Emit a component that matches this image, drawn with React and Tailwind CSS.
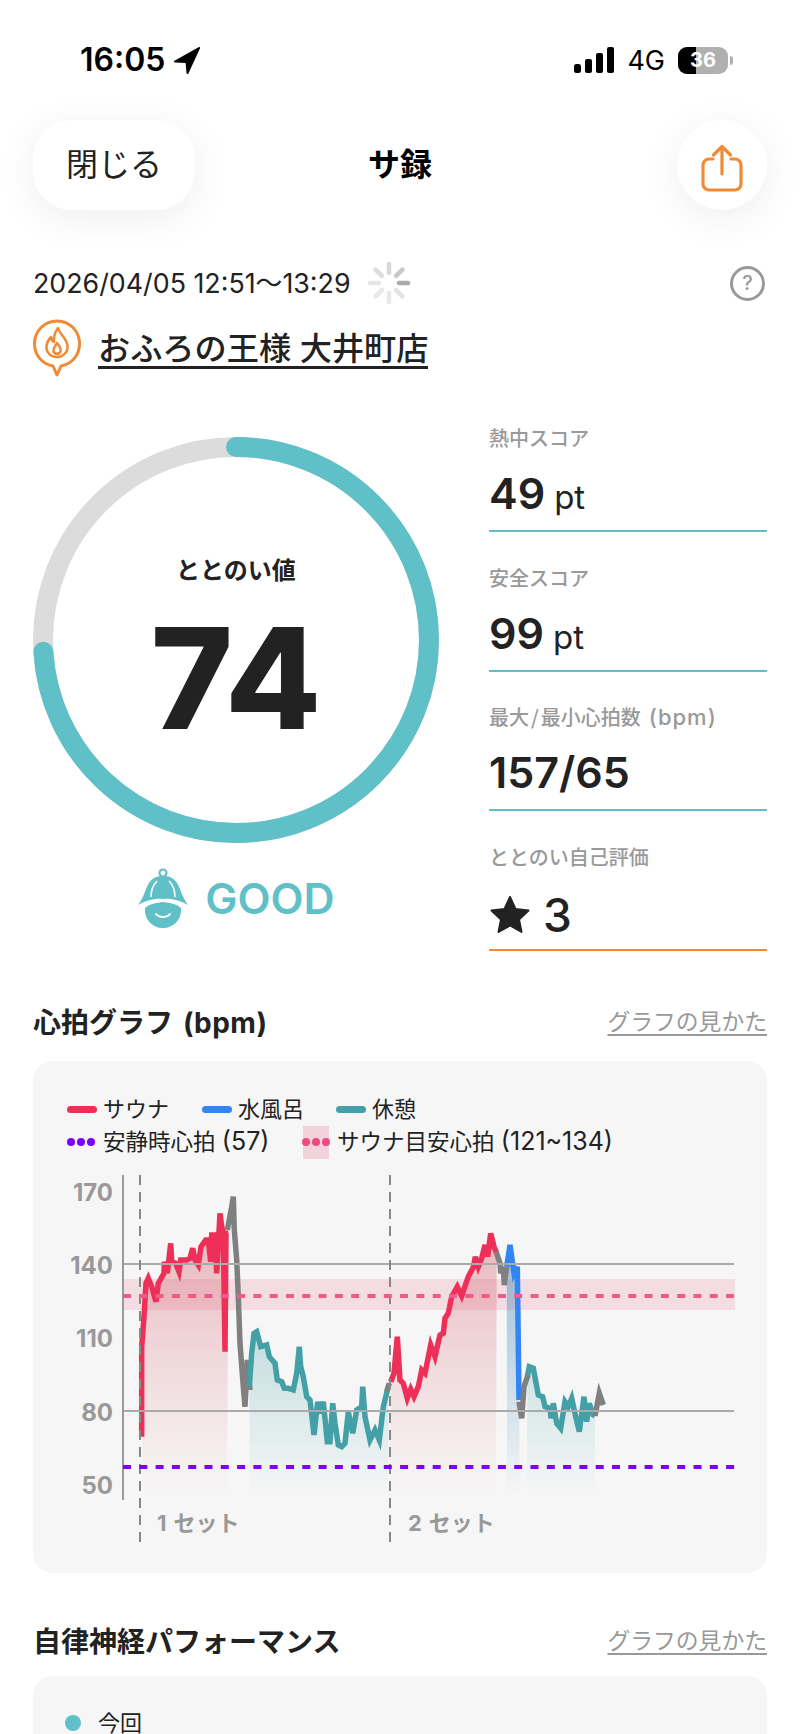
const z3 = (pts) => pts.map(([x, y]) => [40 + x / 3, 1070 + y / 3]);
const z4 = (pts) => pts.map(([x, y]) => [370 + x / 3, 1170 + y / 3]);
const toLine = (pts) => pts.map(([x, y]) => `${x.toFixed(1)},${y.toFixed(1)}`).join(" ");
const toArea = (pts, x0, x1) => `${x0},1497 ${toLine(pts)} ${x1},1497`;

const sauna1 = z3([[305,1100],[305,830],[312,740],[318,640],[325,625],[335,650],[348,695],[355,640],[372,610],[373,575],[382,610],[392,520],[395,575],[407,580],[417,605],[422,570],[440,570],[450,565],[458,535],[465,570],[475,585],[483,530],[497,510],[505,510],[512,575],[515,495],[525,495],[530,610],[540,430],[545,470],[550,490],[555,845],[558,490],[565,490]]);
const sauna1Top = sauna1.filter((p) => p[1] < 1340);
const gray1 = z3([[562,480],[575,410],[580,380],[583,480],[590,570],[595,680],[600,820],[610,950],[615,1010],[622,870],[630,960]]);
const rest1 = z3([[628,950],[635,850],[642,790],[650,785],[662,830],[680,825],[688,860],[705,880],[712,930],[725,935],[733,955],[745,955],[760,960],[770,910],[778,830],[782,890],[790,920],[800,980],[810,990],[822,1095],[833,995],[840,1030],[850,995],[862,1115],[870,1115],[878,1000],[885,1060],[895,1125],[905,1130],[915,1120],[925,1025],[938,1090],[950,1020],[965,1010],[968,950],[975,1040],[990,1110],[1005,1080],[1018,1110],[1030,1010],[1045,950]]);
const gray2 = z3([[1040,965],[1048,940]]);
const sauna2 = z4([[62,635],[72,610],[82,500],[90,630],[100,640],[112,685],[122,658],[132,680],[145,650],[155,600],[165,610],[182,525],[195,560],[210,495],[220,490],[225,445],[235,430],[245,380],[262,350],[275,378],[295,320],[310,292],[316,260],[325,290],[335,265],[345,225],[353,260],[362,190],[372,230],[380,250]]);
const gray3 = z4([[378,245],[390,280],[392,310],[400,290],[403,345],[410,290]]);
const cold = z4([[410,290],[420,225],[432,310],[442,290],[447,690]]);
const gray4 = z4([[447,695],[455,745],[462,650],[474,615]]);
const rest2 = z4([[472,620],[478,590],[490,595],[505,675],[518,680],[525,710],[540,715],[543,745],[550,700],[560,760],[572,775],[585,695],[595,710],[605,685],[615,730],[628,785],[642,680],[650,755],[658,700],[670,735],[675,738]]);
const gray5 = z4([[675,738],[688,670],[700,705]]);

function StatusBar() {
  return (
    <div className="flex h-[120px] items-center justify-between pl-[80px] pr-[67px] text-black">
      <div className="flex items-center gap-[8px]">
        <span className="text-[32px] leading-none font-semibold">16:05</span>
        <svg width="28" height="28" viewBox="0 0 28 28">
          <path d="M26 2 L2 15.5 L13.5 16 L14.5 27 Z" fill="#000" stroke="#000" strokeWidth="2" strokeLinejoin="round" />
        </svg>
      </div>
      <div className="flex items-center">
        <svg width="40" height="26" viewBox="0 0 40 26">
          <rect x="0" y="17" width="7" height="9" rx="2.5" fill="#000" />
          <rect x="11" y="12" width="7" height="14" rx="2" fill="#000" />
          <rect x="22" y="6" width="7" height="20" rx="2" fill="#000" />
          <rect x="33" y="0" width="7" height="26" rx="2" fill="#000" />
        </svg>
        <span className="ml-[13px] text-[27px] leading-none">4G</span>
        <div className="ml-[13px] relative flex h-[27px] w-[50px] overflow-hidden rounded-[9px] bg-[#b0b0b0]">
          <div className="h-full w-[18px] bg-black" />
          <span className="absolute inset-0 flex items-center justify-center text-[20px] font-bold text-white">36</span>
        </div>
        <div className="ml-[2px] h-[9px] w-[3px] rounded-r-full bg-[#b0b0b0]" />
      </div>
    </div>
  );
}

function Header() {
  return (
    <div className="flex h-[90px] items-center px-[33px]">
      <div className="flex w-[162px]">
        <div className="flex h-[90px] w-[162px] items-center justify-center rounded-[38px] bg-white text-[32px] text-[#222] shadow-[0_8px_40px_rgba(0,0,0,0.07)]">
          閉じる
        </div>
      </div>
      <div className="flex-1 text-center text-[32px] font-bold text-black">サ録</div>
      <div className="flex w-[162px] justify-end">
        <div className="flex h-[90px] w-[90px] items-center justify-center rounded-full bg-white pt-[6px] shadow-[0_8px_40px_rgba(0,0,0,0.07)]">
          <svg width="44" height="50" viewBox="0 0 44 50" fill="none" stroke="#f08a34" strokeWidth="3.2" strokeLinecap="round" strokeLinejoin="round">
            <path d="M13 16 H9 a6 6 0 0 0 -6 6 V41 a6 6 0 0 0 6 6 H35 a6 6 0 0 0 6 -6 V22 a6 6 0 0 0 -6 -6 H31" />
            <path d="M22 31 V4 M13.5 12 L22 3.5 L30.5 12" />
          </svg>
        </div>
      </div>
    </div>
  );
}

function Spinner() {
  const spokes = [
    [0, "#aaaaaa"],
    [45, "#e2e2e2"],
    [90, "#e8e8e8"],
    [135, "#e8e8e8"],
    [180, "#e6e6e6"],
    [225, "#dddddd"],
    [270, "#d8d8d8"],
    [315, "#c8c8c8"],
  ];
  return (
    <svg width="44" height="44" viewBox="-22 -22 44 44" className="ml-[16px]">
      {spokes.map(([a, c]) => (
        <line key={a} x1="10" y1="0" x2="19" y2="0" stroke={c} strokeWidth="4.5" strokeLinecap="round" transform={`rotate(${a})`} />
      ))}
    </svg>
  );
}

function FlamePin() {
  return (
    <svg width="48" height="58" viewBox="0 0 48 58" fill="none" stroke="#f08a34" strokeWidth="3" strokeLinejoin="round" strokeLinecap="round">
      <path d="M20 47 C8 45 1.5 35 1.5 24.5 C1.5 12 11.5 2 24 2 C36.5 2 46.5 12 46.5 24.5 C46.5 35 40 45 28 47 L24 56 Z" fill="#fff" />
      <path d="M25 9 C27 16 34 19 34.5 27 C35 34 29 38 24 38 C18 38 13 34 13.5 27 C14 23 16 20 18 18 C18.5 21 19.5 22.5 21 23 C20.5 18 22 13 25 9 Z" strokeWidth="2.5" />
      <path d="M24 24 C26 27 28.5 29 27.5 32.5 C26.5 35.5 21.5 35.5 20.5 32.5 C20 30 22 27 24 24 Z" strokeWidth="2.5" />
    </svg>
  );
}

function Ring() {
  const cx = 203;
  const r = 193;
  const c = 2 * Math.PI * r;
  return (
    <div className="relative h-[406px] w-[406px]">
      <svg width="406" height="406" viewBox="0 0 406 406" className="-rotate-90">
        <circle cx={cx} cy={cx} r={r} fill="none" stroke="#dcdcdc" strokeWidth="20" />
        <circle cx={cx} cy={cx} r={r} fill="none" stroke="#5fc0c8" strokeWidth="20" strokeLinecap="round" strokeDasharray={`${c * 0.74} ${c}`} />
      </svg>
      <div className="absolute inset-0 flex flex-col items-center">
        <div className="mt-[118px] text-[24px] leading-[32px] font-bold text-[#222]">ととのい値</div>
        <div className="mt-[21px] text-[140px] leading-[140px] font-extrabold text-[#222]">74</div>
      </div>
    </div>
  );
}

function GoodIcon() {
  return (
    <svg width="52" height="60" viewBox="0 0 52 60">
      <circle cx="26" cy="5" r="3.5" fill="none" stroke="#5fc0c8" strokeWidth="2.2" />
      <path d="M26 8 C15 8 12 14 9 21 C7 27 4 33 1 37 C8 33 18 30 26 31 C34 30 44 33 51 37 C48 33 45 27 43 21 C40 14 37 8 26 8 Z" fill="#5fc0c8" />
      <path d="M8 40 C14 35 20 35 26 34 C32 35 38 35 44 40 C45 52 36 60 26 60 C16 60 7 52 8 40 Z" fill="#5fc0c8" />
      <path d="M19 46 C22 50 30 50 33 46" fill="none" stroke="#fff" strokeWidth="2" strokeLinecap="round" />
      <path d="M14 29 C14 22 16 17 20 13 M38 29 C38 22 36 17 32 13" fill="none" stroke="#fff" strokeWidth="1.6" />
    </svg>
  );
}

function Stat({ label, children, line = "border-[#5fc0c8]" }) {
  return (
    <div className={`h-[108px] border-b-2 ${line}`}>
      <div className="font-['Noto_Sans_CJK_JP',sans-serif] text-[20px] leading-[28px] font-medium text-[#999]">{label}</div>
      <div className="mt-[20px] flex h-[50px] items-baseline text-[#222]">{children}</div>
    </div>
  );
}

function Dots({ color }) {
  return (
    <div className="flex w-[28px] shrink-0 justify-between">
      <div className={`h-[8px] w-[8px] rounded-full ${color}`} />
      <div className={`h-[8px] w-[8px] rounded-full ${color}`} />
      <div className={`h-[8px] w-[8px] rounded-full ${color}`} />
    </div>
  );
}

function Legend() {
  return (
    <div className="pl-[34px] text-[22px] text-[#222]">
      <div className="flex h-[32px] items-center">
        <div className="h-[7px] w-[30px] rounded-full bg-[#ee2f58]" />
        <span className="ml-[6px]">サウナ</span>
        <div className="ml-[33px] h-[7px] w-[30px] rounded-full bg-[#3385f5]" />
        <span className="ml-[6px]">水風呂</span>
        <div className="ml-[32px] h-[7px] w-[30px] rounded-full bg-[#43a0a6]" />
        <span className="ml-[6px]">休憩</span>
      </div>
      <div className="flex h-[33px] items-center">
        <Dots color="bg-[#7a00ff]" />
        <span className="ml-[8px] w-[200px] text-[22.5px]">
          安静時心拍 <span className="text-[25px]">(57)</span>
        </span>
        <div className="flex h-[33px] w-[26px] items-center justify-center bg-[#f2d3dc]">
          <Dots color="bg-[#ee4a80]" />
        </div>
        <span className="ml-[8px] text-[22.5px]">
          サウナ目安心拍 <span className="text-[25px]">(121~134)</span>
        </span>
      </div>
    </div>
  );
}

function Chart() {
  const yLabels = [
    ["170", 1192],
    ["140", 1265],
    ["110", 1338],
    ["80", 1412],
    ["50", 1485],
  ];
  return (
    <svg width="680" height="375" viewBox="60 1170 680 375" className="mt-[11px] ml-[27px] block">
      <defs>
        <linearGradient id="redFill" gradientUnits="userSpaceOnUse" x1="0" y1="1200" x2="0" y2="1497">
          <stop offset="0" stopColor="#c93a48" stopOpacity="0.38" />
          <stop offset="1" stopColor="#e06070" stopOpacity="0" />
        </linearGradient>
        <linearGradient id="tealFill" gradientUnits="userSpaceOnUse" x1="0" y1="1310" x2="0" y2="1497">
          <stop offset="0" stopColor="#43a0a6" stopOpacity="0.32" />
          <stop offset="1" stopColor="#43a0a6" stopOpacity="0" />
        </linearGradient>
        <linearGradient id="blueFill" gradientUnits="userSpaceOnUse" x1="0" y1="1270" x2="0" y2="1497">
          <stop offset="0" stopColor="#2f7fb5" stopOpacity="0.42" />
          <stop offset="1" stopColor="#2f7fb5" stopOpacity="0" />
        </linearGradient>
      </defs>

      <rect x="123" y="1279" width="612" height="31" fill="#f2d3dc" fillOpacity="0.7" />

      <polygon points={toArea(sauna1Top, 142, 227)} fill="url(#redFill)" />
      <polygon points={toArea(rest1, 250, 388)} fill="url(#tealFill)" />
      <polygon points={toArea(sauna2, 391, 496)} fill="url(#redFill)" />
      <polygon points={toArea(cold, 507, 520)} fill="url(#blueFill)" />
      <polygon points={toArea(rest2, 527, 595)} fill="url(#tealFill)" />

      <g fill="none" strokeWidth="5.5">
        <polyline points={toLine(sauna1)} stroke="#ee2f58" />
        <polyline points={toLine(gray1)} stroke="#808080" />
        <polyline points={toLine(rest1)} stroke="#43a0a6" />
        <polyline points={toLine(sauna2)} stroke="#ee2f58" />
        <polyline points={toLine(gray3)} stroke="#808080" />
        <polyline points={toLine(cold)} stroke="#3385f5" />
        <polyline points={toLine(rest2)} stroke="#43a0a6" />
        <polyline points={toLine(gray4)} stroke="#808080" />
        <polyline points={toLine(gray5)} stroke="#808080" />
        <polyline points={toLine(gray2)} stroke="#808080" />
      </g>

      <line x1="124" y1="1264" x2="734" y2="1264" stroke="#aaa" strokeWidth="2" />
      <line x1="124" y1="1411" x2="734" y2="1411" stroke="#aaa" strokeWidth="2" />
      <line x1="123" y1="1175" x2="123" y2="1500" stroke="#999" strokeWidth="2" />
      <line x1="140" y1="1175" x2="140" y2="1542" stroke="#888" strokeWidth="2" strokeDasharray="10 7" />
      <line x1="390" y1="1175" x2="390" y2="1542" stroke="#888" strokeWidth="2" strokeDasharray="10 7" />
      <line x1="123" y1="1296" x2="735" y2="1296" stroke="#ee5a8a" strokeWidth="4" strokeDasharray="8 8.3" />
      <line x1="123" y1="1467" x2="735" y2="1467" stroke="#7a00ff" strokeWidth="4" strokeDasharray="8 8.3" />

      {yLabels.map(([t, y]) => (
        <text key={t} x="113" y={y + 9} textAnchor="end" fontSize="24" fontWeight="700" fill="#999">
          {t}
        </text>
      ))}
      <text x="157" y="1531" fontSize="22" fontWeight="700" fill="#999">1<tspan dx="7">セット</tspan></text>
      <text x="408" y="1531" fontSize="22" fontWeight="700" fill="#999">2<tspan dx="7">セット</tspan></text>
    </svg>
  );
}

function SectionTitle({ children }) {
  return (
    <div className="flex h-[40px] items-center justify-between">
      <div className="text-[28px] font-bold text-[#222]">{children}</div>
      <div className="text-[22.8px] text-[#999] underline underline-offset-[4px]">グラフの見かた</div>
    </div>
  );
}

export default function App() {
  return (
    <div className="h-[1734px] w-[800px] overflow-hidden bg-white font-['Inter','Noto_Sans_CJK_JP',sans-serif]">
      <StatusBar />
      <Header />

      <div className="px-[33px]">
        <div className="mt-[51px] flex h-[44px] items-center">
          <span className="text-[26.8px] text-[#222]">2026/04/05 12:51～13:29</span>
          <Spinner />
          <div className="mr-[2px] ml-auto flex h-[35px] w-[35px] items-center justify-center rounded-full border-[3px] border-[#999] text-[20px] font-medium text-[#999]">
            ?
          </div>
        </div>

        <div className="mt-[14px] flex h-[58px] items-start">
          <FlamePin />
          <span className="mt-[13px] ml-[17px] border-b-[3px] border-[#222] text-[32.2px] leading-[34px] font-medium text-[#222]">
            おふろの王様 大井町店
          </span>
        </div>

        <div className="mt-[46px] flex">
          <div className="w-[406px]">
            <div className="mt-[14px]">
              <Ring />
            </div>
            <div className="mt-[25px] flex items-center justify-center gap-[16px]">
              <GoodIcon />
              <span className="text-[43px] leading-none font-semibold text-[#5fc0c8]">GOOD</span>
            </div>
          </div>

          <div className="mt-[1px] ml-[50px] flex flex-1 flex-col gap-[31.5px]">
            <Stat label="熱中スコア">
              <span className="text-[43px] leading-none font-semibold">49</span>
              <span className="ml-[9px] text-[33px] leading-none">pt</span>
            </Stat>
            <Stat label="安全スコア">
              <span className="text-[43px] leading-none font-semibold">99</span>
              <span className="ml-[9px] text-[33px] leading-none">pt</span>
            </Stat>
            <Stat
              label={
                <>
                  最大<span className="mx-[2px]">/</span>最小心拍数
                  <span className="ml-[8px] font-['Inter'] text-[22px] tracking-[1px]">(bpm)</span>
                </>
              }
            >
              <span className="text-[43px] leading-none font-semibold">157/65</span>
            </Stat>
            <Stat label="ととのい自己評価" line="border-[#f08a34]">
              <svg width="42" height="38" viewBox="0 0 42 38" className="-translate-y-[2px] self-center">
                <path d="M21 2 L26.5 14 L39.5 15.5 L30 24.5 L32.5 37 L21 30.5 L9.5 37 L12 24.5 L2.5 15.5 L15.5 14 Z" fill="#222" stroke="#222" strokeWidth="2" strokeLinejoin="round" />
              </svg>
              <span className="ml-[12px] translate-y-[1px] text-[46px] leading-none font-medium">3</span>
            </Stat>
          </div>
        </div>

        <div className="mt-[52px]">
          <SectionTitle>
            心拍グラフ<span className="ml-[10px] tracking-[0.5px]">(bpm)</span>
          </SectionTitle>
        </div>

        <div className="mt-[18px] h-[512px] rounded-[20px] bg-[#f6f6f6] pt-[33px]">
          <Legend />
          <Chart />
        </div>

        <div className="mt-[49px]">
          <SectionTitle>自律神経パフォーマンス</SectionTitle>
        </div>

        <div className="mt-[14px] h-[200px] rounded-[20px] bg-[#f6f6f6] pt-[36px] pl-[32px]">
          <div className="flex h-[22px] items-center">
            <div className="h-[16px] w-[16px] rounded-full bg-[#5fc0c8]" />
            <span className="ml-[17px] text-[22px] leading-none text-[#222]">今回</span>
          </div>
        </div>
      </div>
    </div>
  );
}
